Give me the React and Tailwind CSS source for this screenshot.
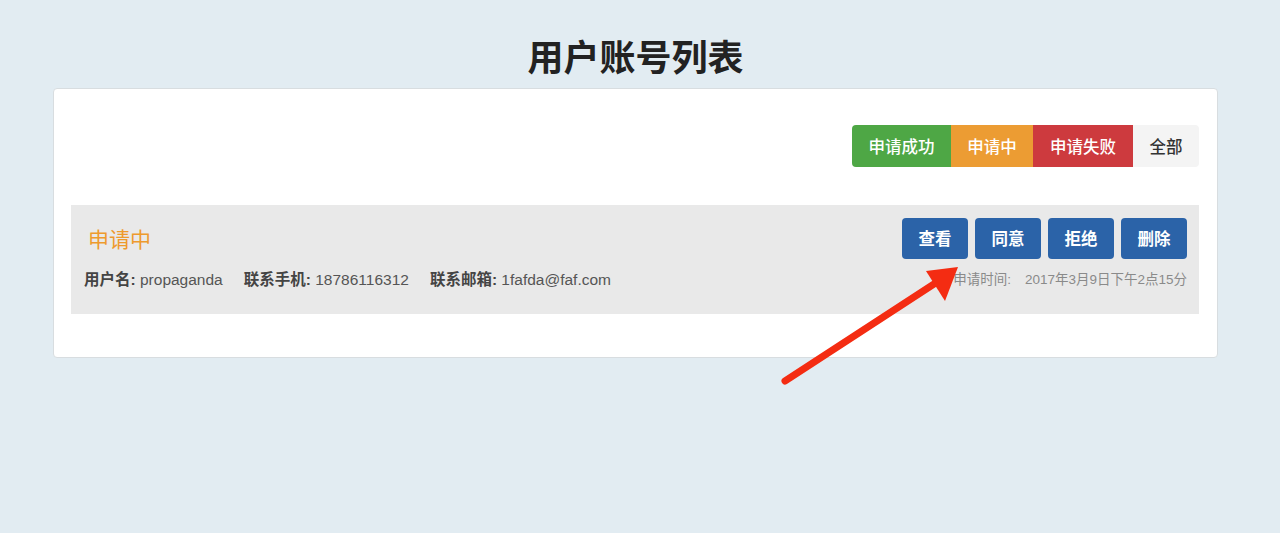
const font = { fontFamily: '"Liberation Sans", "Noto Sans CJK SC", sans-serif' };

const filters = [
  { label: '申请成功', cls: 'bg-[#4ea745] text-white rounded-l w-[99px]' },
  { label: '申请中', cls: 'bg-[#ec9c33] text-white w-[82px]' },
  { label: '申请失败', cls: 'bg-[#cd3a3e] text-white w-[100px]' },
  { label: '全部', cls: 'bg-[#f4f4f4] text-[#333] rounded-r w-[66px]' },
];

const actions = ['查看', '同意', '拒绝', '删除'];

function Arrow() {
  return (
    <svg className="absolute left-0 top-0 pointer-events-none" width="1280" height="533">
      <path d="M785 381 L934 284" stroke="#f42c12" strokeWidth="7" strokeLinecap="round" />
      <polygon points="926,271 958,267 945,301" fill="#f42c12" />
    </svg>
  );
}

export default function App() {
  return (
    <div className="relative min-h-[533px] bg-[#e2ecf2] font-['Noto_Sans_CJK_SC',sans-serif]">
      <div className="ml-[53px] w-[1165px]">
        <h1 className="pt-[30px] text-center text-[36px] leading-[50px] font-bold text-[#222]">用户账号列表</h1>

        <div className="mt-[8px] h-[270px] rounded bg-white border border-[#d8dde0] pl-[17px] pr-[18px] pt-[36px]">
          <div className="flex justify-end">
            {filters.map((f) => (
              <div key={f.label} className={`h-[42px] flex items-center justify-center text-[16.5px] font-medium ${f.cls}`}>
                {f.label}
              </div>
            ))}
          </div>

          <div className="mt-[38px] h-[109px] bg-[#e9e9e9] flex justify-between pl-[13px] pr-[12px] pt-[13px]">
            <div>
              <div className="h-[41px] flex items-center pl-[4px] text-[21px] text-[#ee9a2d]">申请中</div>
              <div className="mt-[9px] text-[15.5px] text-[#555] flex gap-[21px]" style={font}>
                <span><b className="text-[#444]">用户名:</b> propaganda</span>
                <span><b className="text-[#444]">联系手机:</b> 18786116312</span>
                <span><b className="text-[#444]">联系邮箱:</b> 1fafda@faf.com</span>
              </div>
            </div>
            <div className="flex flex-col items-end">
              <div className="flex gap-[7px]">
                {actions.map((a) => (
                  <button key={a} className="w-[66px] h-[41px] rounded bg-[#2b63a8] text-white text-[16.5px] font-bold">
                    {a}
                  </button>
                ))}
              </div>
              <div className="mt-[11px] text-[13.5px] text-[#8a8a8a] flex gap-[14px]" style={font}>
                <span>申请时间:</span>
                <span>2017年3月9日下午2点15分</span>
              </div>
            </div>
          </div>
        </div>
      </div>

      <Arrow />
    </div>
  );
}
